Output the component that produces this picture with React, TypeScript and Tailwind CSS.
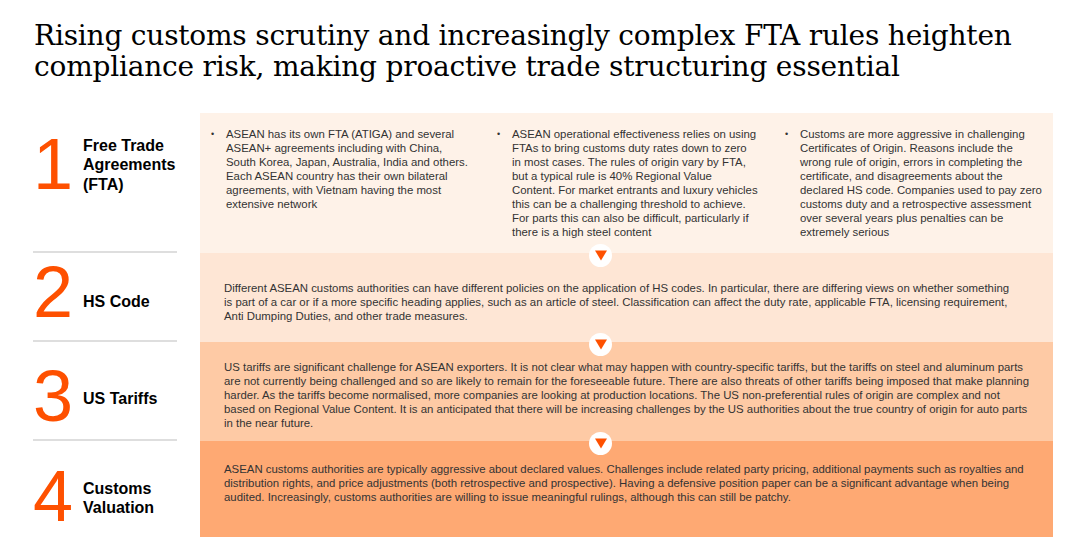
import React from 'react'

interface Row {
  num: string
  label: React.ReactNode
  bg: string
  h: string
  leftPad: string
  labelPad: string
  textPad: string
  divider: boolean
  arrow: boolean
  body: React.ReactNode
}

// lines kept as in the source slide
const bullets: string[][] = [
  [
    'ASEAN has its own FTA (ATIGA) and several',
    'ASEAN+ agreements including with China,',
    'South Korea, Japan, Australia, India and others.',
    'Each ASEAN country has their own bilateral',
    'agreements, with Vietnam having the most',
    'extensive network',
  ],
  [
    'ASEAN operational effectiveness relies on using',
    'FTAs to bring customs duty rates down to zero',
    'in most cases. The rules of origin vary by FTA,',
    'but a typical rule is 40% Regional Value',
    'Content. For market entrants and luxury vehicles',
    'this can be a challenging threshold to achieve.',
    'For parts this can also be difficult, particularly if',
    'there is a high steel content',
  ],
  [
    'Customs are more aggressive in challenging',
    'Certificates of Origin. Reasons include the',
    'wrong rule of origin, errors in completing the',
    'certificate, and disagreements about the',
    'declared HS code. Companies used to pay zero',
    'customs duty and a retrospective assessment',
    'over several years plus penalties can be',
    'extremely serious',
  ],
]

const Arrow = () => (
  <div className="absolute left-[389px] bottom-[-14px] z-10 flex h-[23px] w-[23px] items-center justify-center rounded-full bg-white">
    <svg width="12" height="11" viewBox="0 0 12 11">
      <path d="M0 0.5 L12 0.5 L6 10.5 Z" fill="#fe5000" />
    </svg>
  </div>
)

const rows: Row[] = [
  {
    num: '1',
    label: (
      <>
        Free Trade
        <br />
        Agreements
        <br />
        (FTA)
      </>
    ),
    bg: 'bg-[#fef2e8]',
    h: 'h-[140px]',
    leftPad: 'pb-[36px]',
    labelPad: 'pt-[2px]',
    textPad: 'pt-[14px]',
    divider: true,
    arrow: true,
    body: (
      <div className="grid grid-cols-[286px_288px_1fr] pl-[11px]">
        {bullets.map((lines, i) => (
          <div key={i} className="flex">
            <span className="w-[15px] shrink-0 text-[9px]">•</span>
            <p className="whitespace-nowrap">
              {lines.map((l, j) => (
                <span key={j} className="block">
                  {l}
                </span>
              ))}
            </p>
          </div>
        ))}
      </div>
    ),
  },
  {
    num: '2',
    label: 'HS Code',
    bg: 'bg-[#fee6d5]',
    h: 'h-[89px]',
    leftPad: 'pb-[9px]',
    labelPad: 'pt-[20px]',
    textPad: 'pt-[28px]',
    divider: true,
    arrow: true,
    body: (
      <p className="pl-[24px] pr-[38px]">
        Different ASEAN customs authorities can have different policies on the application of HS codes. In particular, there are differing views on whether something is part of a car or if a more specific heading applies, such as an article of steel. Classification can affect the duty rate, applicable FTA, licensing requirement, Anti Dumping Duties, and other trade measures.
      </p>
    ),
  },
  {
    num: '3',
    label: 'US Tariffs',
    bg: 'bg-[#fecaa5]',
    h: 'h-[99px]',
    leftPad: 'pt-[11px]',
    labelPad: 'pt-[6px]',
    textPad: 'pt-[18px]',
    divider: true,
    arrow: true,
    body: (
      <p className="pl-[24px] pr-[21px]">
        US tariffs are significant challenge for ASEAN exporters. It is not clear what may happen with country-specific tariffs, but the tariffs on steel and aluminum parts are not currently being challenged and so are likely to remain for the foreseeable future. There are also threats of other tariffs being imposed that make planning harder. As the tariffs become normalised, more companies are looking at production locations. The US non-preferential rules of origin are complex and not based on Regional Value Content. It is an anticipated that there will be increasing challenges by the US authorities about the true country of origin for auto parts in the near future.
      </p>
    ),
  },
  {
    num: '4',
    label: (
      <>
        Customs
        <br />
        Valuation
      </>
    ),
    bg: 'bg-[#fea973]',
    h: 'h-[96px]',
    leftPad: 'pt-[14px]',
    labelPad: 'pt-[4px]',
    textPad: 'pt-[21px]',
    divider: false,
    arrow: false,
    body: (
      <p className="pl-[24px] pr-[26px]">
        ASEAN customs authorities are typically aggressive about declared values. Challenges include related party pricing, additional payments such as royalties and distribution rights, and price adjustments (both retrospective and prospective). Having a defensive position paper can be a significant advantage when being audited. Increasingly, customs authorities are willing to issue meaningful rulings, although this can still be patchy.
      </p>
    ),
  },
]

export default function App() {
  return (
    <div className="h-[556px] w-[1080px] overflow-hidden bg-white font-['Liberation_Sans',Arial,sans-serif]">
      <h1 className="pl-[34px] pt-[20px] font-['DejaVu_Serif',Georgia,serif] text-[28px] leading-[31px] tracking-[-0.2px] text-black">
        Rising customs scrutiny and increasingly complex FTA rules heighten
        <br />
        compliance risk, making proactive trade structuring essential
      </h1>

      <div className="mt-[31px] pl-[33px]">
        {rows.map((r) => (
          <div key={r.num} className={`flex ${r.h}`}>
            <div
              className={`flex w-[144px] shrink-0 items-center ${r.leftPad} ${
                r.divider ? 'border-b-2 border-[#dedede]' : ''
              }`}
            >
              <span className="w-[50px] shrink-0 text-[72px] leading-none text-[#fe5000]">{r.num}</span>
              <span className={`text-[16px] font-bold leading-[19.5px] text-black ${r.labelPad}`}>{r.label}</span>
            </div>
            <div className={`relative ml-[23px] w-[853px] ${r.bg} ${r.textPad} text-[11.4px] leading-[14px] text-[#333333]`}>
              {r.body}
              {r.arrow && <Arrow />}
            </div>
          </div>
        ))}
      </div>
    </div>
  )
}
